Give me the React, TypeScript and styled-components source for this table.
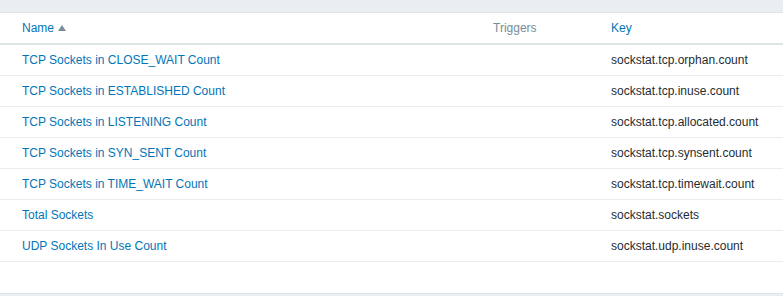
import * as React from 'react';
import styled, { createGlobalStyle } from 'styled-components';

const GlobalStyle = createGlobalStyle`
  html, body {
    margin: 0;
    padding: 0;
    background: #ffffff;
  }
  body {
    font-family: Arial, 'Liberation Sans', sans-serif;
    font-size: 12px;
    color: #1f2c33;
  }
`;

const Page = styled.div`
  width: 783px;
  height: 296px;
  display: flex;
  flex-direction: column;
  background: #ebeef0;
  overflow: hidden;
`;

const Panel = styled.div`
  margin-top: 12px;
  border-top: 1px solid #dfe4e7;
  border-bottom: 1px solid #dfe4e7;
  background: #ffffff;
  height: 282px;
  box-sizing: border-box;
`;

const Table = styled.table`
  width: 100%;
  border-collapse: collapse;
`;

const HeadCell = styled.th<{ $muted?: boolean; $first?: boolean }>`
  height: 30px;
  padding: 0 0 0 ${p => (p.$first ? '22px' : '0')};
  text-align: left;
  font-weight: normal;
  color: ${p => (p.$muted ? '#768d99' : '#0275b8')};
  border-bottom: 2px solid #dfe4e7;
  white-space: nowrap;
`;

const Row = styled.tr`
  & > td {
    height: 30px;
    border-bottom: 1px solid #ebeef0;
  }
`;

const Cell = styled.td<{ $first?: boolean }>`
  padding: 0 0 0 ${p => (p.$first ? '22px' : '0')};
  white-space: nowrap;
`;

const ItemLink = styled.a`
  color: #0275b8;
  text-decoration: none;
  cursor: pointer;
`;

const SortArrow = styled.span`
  display: inline-block;
  width: 0;
  height: 0;
  margin-left: 4px;
  border-left: 4px solid transparent;
  border-right: 4px solid transparent;
  border-bottom: 6px solid #768d99;
  vertical-align: 1px;
`;

const items = [
  { name: 'TCP Sockets in CLOSE_WAIT Count', key: 'sockstat.tcp.orphan.count' },
  { name: 'TCP Sockets in ESTABLISHED Count', key: 'sockstat.tcp.inuse.count' },
  { name: 'TCP Sockets in LISTENING Count', key: 'sockstat.tcp.allocated.count' },
  { name: 'TCP Sockets in SYN_SENT Count', key: 'sockstat.tcp.synsent.count' },
  { name: 'TCP Sockets in TIME_WAIT Count', key: 'sockstat.tcp.timewait.count' },
  { name: 'Total Sockets', key: 'sockstat.sockets' },
  { name: 'UDP Sockets In Use Count', key: 'sockstat.udp.inuse.count' },
];

export default function App() {
  return (
    <>
      <GlobalStyle />
      <Page>
        <Panel>
          <Table>
            <colgroup>
              <col style={{ width: 493 }} />
              <col style={{ width: 118 }} />
              <col />
            </colgroup>
            <thead>
              <tr>
                <HeadCell $first>
                  Name
                  <SortArrow />
                </HeadCell>
                <HeadCell $muted>Triggers</HeadCell>
                <HeadCell>Key</HeadCell>
              </tr>
            </thead>
            <tbody>
              {items.map(item => (
                <Row key={item.key}>
                  <Cell $first>
                    <ItemLink>{item.name}</ItemLink>
                  </Cell>
                  <Cell />
                  <Cell>{item.key}</Cell>
                </Row>
              ))}
            </tbody>
          </Table>
        </Panel>
      </Page>
    </>
  );
}
